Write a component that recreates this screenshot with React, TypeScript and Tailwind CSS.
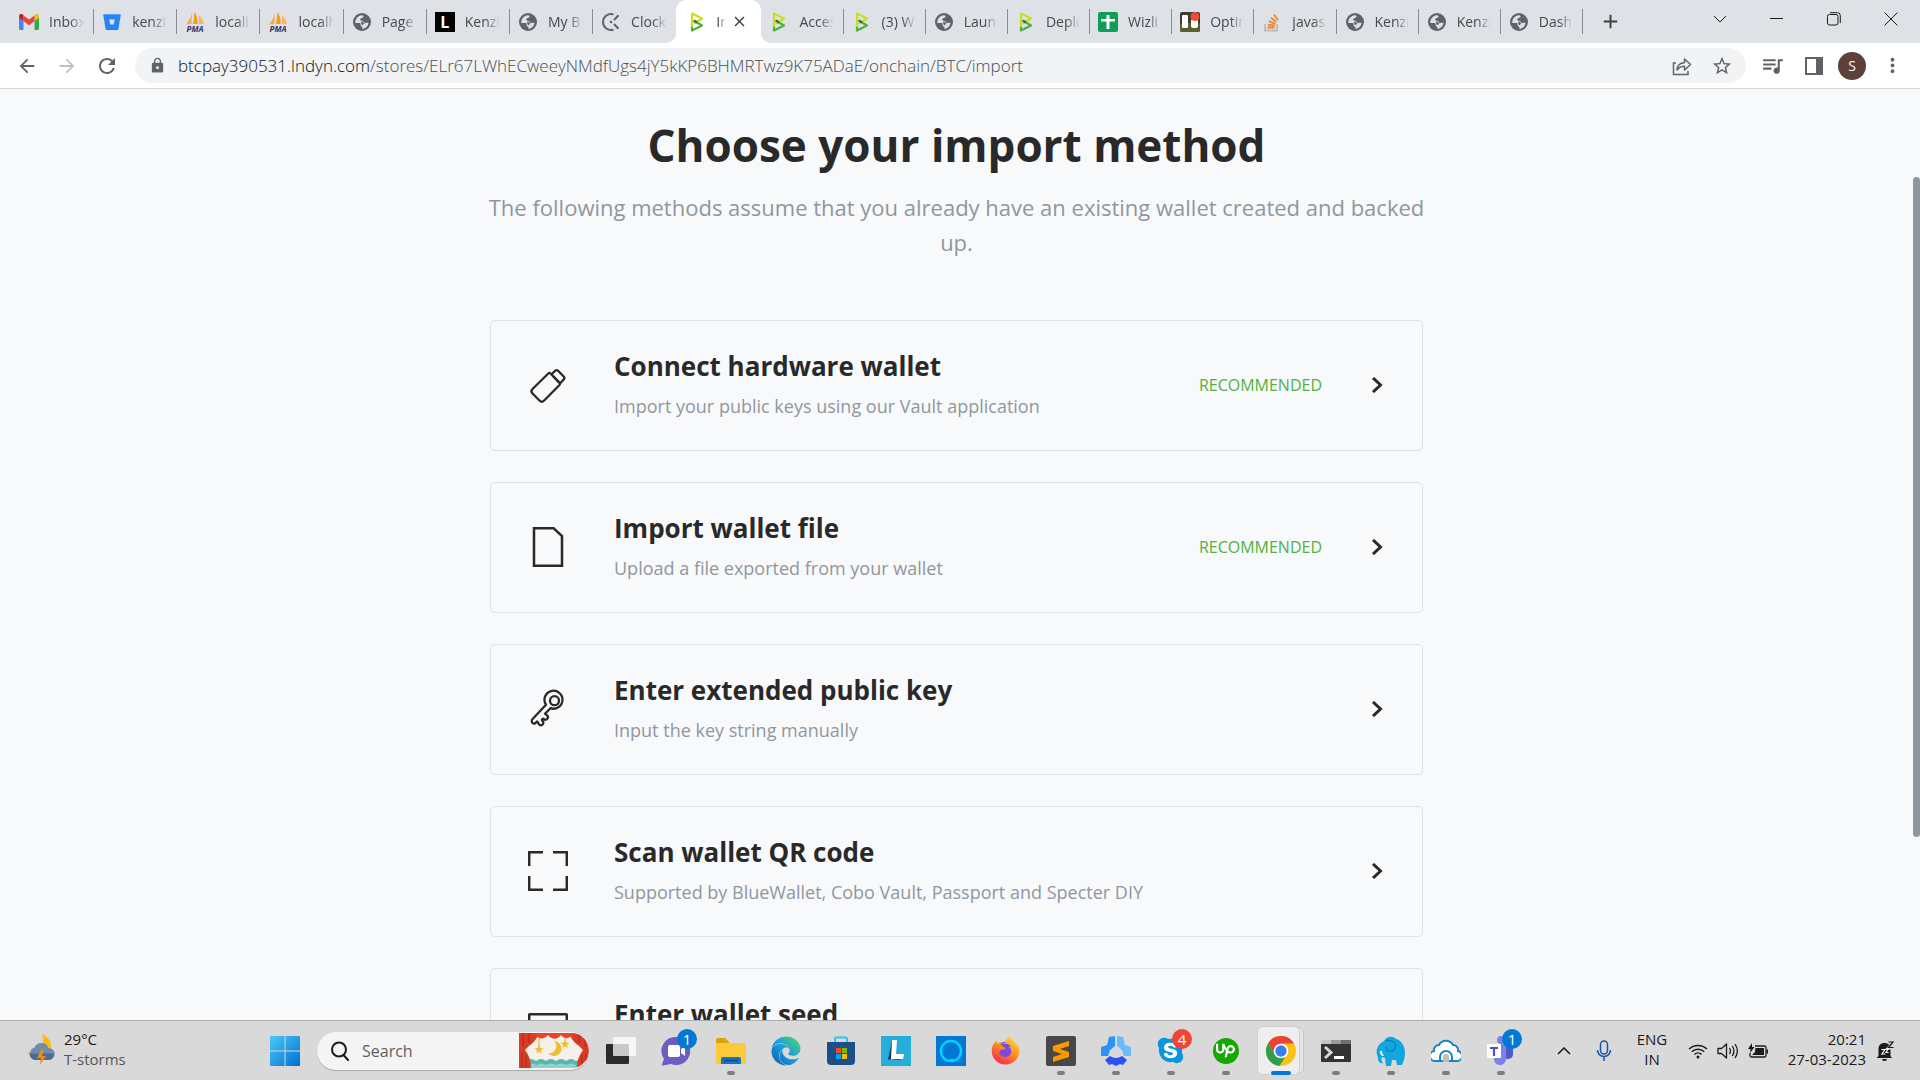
import React from 'react';
import {
  MdArrowBack,
  MdArrowForward,
  MdRefresh,
  MdLock,
  MdStarBorder,
  MdQueueMusic,
  MdMoreVert,
  MdAdd,
  MdClose,
} from 'react-icons/md';
import { FaBitbucket, FaEdge, FaFirefoxBrowser, FaSkype } from 'react-icons/fa';
import { SiUpwork } from 'react-icons/si';

/* ---------- Favicons ---------- */

const GmailIcon = () => (
  <svg viewBox="0 0 20 16" className="w-5 h-4">
    <path d="M0 3v11.5c0 .8.6 1.5 1.4 1.5h3.1V6.5z" fill="#4285f4" />
    <path d="M20 3v11.5c0 .8-.6 1.5-1.4 1.5h-3.1V6.5z" fill="#34a853" />
    <path d="M15.5 2.2v4.9L20 3.6V2.4C20 .3 17.7-.8 16 .5z" fill="#fbbc04" />
    <path d="M4.5 7.1V1.4L10 5.6l5.5-4.2v5.7L10 11.4z" fill="#ea4335" />
    <path d="M0 2.4v1.2l4.5 3.5V1.4L4 .5C2.3-.8 0 .3 0 2.4z" fill="#c5221f" />
  </svg>
);

const PmaIcon = () => (
  <svg viewBox="0 0 20 20" className="w-5 h-5">
    <path d="M7 1 6.5 12 1 12.500C4 9 6 5 7 1z" fill="#f9a94a" />
    <path d="M9 0c3 3 4 8 3.500 12L7.800 12C9 8 9.500 4 9 0z" fill="#f89c0e" />
    <path d="M13.500 3c3 2.500 5 6 5.500 9l-5.500.3c.5-3 .5-6 0-9.300z" fill="#f9b46a" />
    <text x="10" y="19.500" textAnchor="middle" fontSize="8" fontWeight="700" fontStyle="italic" fontFamily="Open Sans, sans-serif" fill="#34336b">PMA</text>
  </svg>
);

const GlobeIcon = () => (
  <svg viewBox="0 0 20 20" className="w-5 h-5">
    <circle cx="10" cy="10" r="9" fill="#5f6368" />
    <path d="M10 3.200c1.500.3 2 1.200 1.200 2.100-.9 1-2.600.7-3 1.900-.3 1 .6 1.400 1.800 1.500 1.800.2 1.500 2 2.900 2.200 1.200.2 2.400-.4 3.600.1-.4 3-3 5.700-6 6l-.2-2.200c-1.500-.4-1.900-1.400-1.700-2.600.1-.9-.5-1.300-1.600-1.300H3.300C3 7 6 3.200 10 3.200z" fill="#dee1e6" />
    <path d="M9.500 9.200c1.600.2 1.600 2 3 2.300l-2.200 1.700c-1-.8-1.500-2-.8-4z" fill="#5f6368" />
  </svg>
);

const LetterIcon = () => (
  <span className="flex w-5 h-5 items-center justify-center bg-black text-white text-base leading-5 font-bold">L</span>
);

const ClockifyIcon = () => (
  <svg viewBox="0 0 20 20" className="w-5 h-5" fill="none" stroke="#5f6368" strokeWidth="2">
    <path d="M12.500 2.400A8 8 0 1 0 12.500 17.600" />
    <path d="m13 8 4.500-4.700M13 12l4.500 4.700" />
    <circle cx="10" cy="10" r="1.300" fill="#5f6368" stroke="none" />
  </svg>
);

const BtcPayIcon = () => (
  <svg viewBox="0 0 14 20" className="w-[14px] h-5" fill="none" strokeWidth="2.200" strokeLinecap="round" strokeLinejoin="round">
    <path d="M4.500 9 12 13.500 2 18.500V14" stroke="#51b13e" />
    <path d="M2 14V1.500L12 6.500 4.500 11" stroke="#cedc21" />
    <path d="M4.500 9 6.500 10.200" stroke="#1e7a44" />
  </svg>
);

const WizlistIcon = () => (
  <svg viewBox="0 0 20 20" className="w-5 h-5">
    <rect width="20" height="20" rx="2" fill="#0f9d58" />
    <path d="M8.500 3h3v4H17v2.500h-5.500V17h-3V9.500H3V7h5.500z" fill="#fff" />
  </svg>
);

const OptimIcon = () => (
  <svg viewBox="0 0 20 20" className="w-5 h-5">
    <rect width="20" height="20" rx="2" fill="#3f3a2c" />
    <rect y="11" width="20" height="9" rx="2" fill="#5c5f31" />
    <rect x="2" y="3" width="6" height="13" rx="1" fill="#fff" />
    <rect x="11" y="7" width="7" height="9" rx="2" fill="#fff" />
    <circle cx="15" cy="4.500" r="4.500" fill="#ee4b35" />
  </svg>
);

const StackIcon = () => (
  <svg viewBox="0 0 20 20" className="w-5 h-5" fill="none" strokeWidth="1.800">
    <path d="M3 12v6.500h12V12" stroke="#bcbbbb" />
    <path d="M5.500 15.500h7M5.800 12.600l6.900 1M6.800 9l6.400 2.900M9 5.600l5.300 4.500M12 2.500l4 5.700" stroke="#f48024" />
  </svg>
);

const BitbucketIcon = () => <FaBitbucket className="text-[#2684ff]" size={18} />;

const tabs = [
  { title: 'Inbox', Icon: GmailIcon },
  { title: 'kenzi', Icon: BitbucketIcon },
  { title: 'localh', Icon: PmaIcon },
  { title: 'localh', Icon: PmaIcon },
  { title: 'Page', Icon: GlobeIcon },
  { title: 'Kenzi', Icon: LetterIcon },
  { title: 'My B', Icon: GlobeIcon },
  { title: 'Clock', Icon: ClockifyIcon },
  { title: 'Im', Icon: BtcPayIcon, active: true },
  { title: 'Acces', Icon: BtcPayIcon },
  { title: '(3) W', Icon: BtcPayIcon },
  { title: 'Laun', Icon: GlobeIcon },
  { title: 'Deplo', Icon: BtcPayIcon },
  { title: 'Wizli', Icon: WizlistIcon },
  { title: 'Optin', Icon: OptimIcon },
  { title: 'javas', Icon: StackIcon },
  { title: 'Kenzi', Icon: GlobeIcon },
  { title: 'Kenzi', Icon: GlobeIcon },
  { title: 'Dash', Icon: GlobeIcon },
];

/* ---------- Browser ---------- */

const TabStrip = () => (
  <div className="flex h-[43px] bg-[#dee1e6] pl-[11px]">
    <div
      className="grid flex-1 max-w-[1572px] grid-cols-[repeat(8,minmax(0,83fr))_minmax(0,85fr)_repeat(10,minmax(0,82fr))]"
      role="tablist"
    >
      {tabs.map(({ title, Icon, active }, i) =>
        active ? (
          <div key={i} className="relative flex items-center rounded-t-[10px] bg-white pl-[14px]">
            <svg viewBox="0 0 10 10" className="absolute bottom-0 -left-[10px] size-[10px] fill-white"><path d="M10 0v10H0A10 10 0 0 0 10 0z" /></svg>
            <svg viewBox="0 0 10 10" className="absolute bottom-0 -right-[10px] size-[10px] fill-white"><path d="M0 0v10h10A10 10 0 0 1 0 0z" /></svg>
            <button role="tab" aria-selected="true" className="flex items-center gap-3 text-sm text-[#45494d]">
              <Icon />
              <span className="w-[10px] overflow-hidden whitespace-nowrap [mask-image:linear-gradient(to_right,black_30%,transparent)]">{title}</span>
            </button>
            <button aria-label="Close tab" className="ml-[5px] text-[#3c4043]"><MdClose size={17} /></button>
          </div>
        ) : (
          <button
            key={i}
            role="tab"
            aria-selected="false"
            className={`my-[9px] flex items-center gap-[10px] pl-2 pr-[9px] text-sm text-[#45494d] ${i === 7 ? '' : 'border-r border-[#8b8f94]'}`}
          >
            <span className="flex w-5 shrink-0 justify-center"><Icon /></span>
            <span className="flex-1 overflow-hidden whitespace-nowrap text-left [mask-image:linear-gradient(to_right,black_60%,transparent)]">{title}</span>
          </button>
        )
      )}
    </div>
    <button aria-label="New tab" className="ml-4 text-[#3c4043]"><MdAdd size={23} /></button>
    <div className="ml-auto flex h-[37px] pr-px text-[#1b1b1b]">
      <button aria-label="Search tabs" className="flex w-[57px] items-center justify-center">
        <svg viewBox="0 0 14 8" className="w-[14px]" fill="none" stroke="currentColor"><path d="m1 1 6 6 6-6" /></svg>
      </button>
      <button aria-label="Minimize" className="flex w-[57px] items-center justify-center"><span className="h-px w-[13px] bg-current" /></button>
      <button aria-label="Restore" className="flex w-[57px] items-center justify-center">
        <svg viewBox="0 0 14 14" className="w-[14px]" fill="none" stroke="currentColor"><rect x=".5" y="2.500" width="10.500" height="10.500" rx="2" /><path d="M3 .7h7.500A2.800 2.800 0 0 1 13.300 3.500V11" /></svg>
      </button>
      <button aria-label="Close" className="flex w-[57px] items-center justify-center">
        <svg viewBox="0 0 14 14" className="w-[14px]" stroke="currentColor"><path d="m.5.5 13 13M13.500.5l-13 13" /></svg>
      </button>
    </div>
  </div>
);

const Toolbar = () => (
  <div className="flex h-[46px] items-center border-b border-[#d5d7da] bg-white pl-[7px] pr-[10px] text-[#5f6368]">
    <button aria-label="Back" className="flex w-10 justify-center"><MdArrowBack size={22} /></button>
    <button aria-label="Forward" className="flex w-10 justify-center text-[#bdc1c6]"><MdArrowForward size={22} /></button>
    <button aria-label="Reload" className="flex w-10 justify-center"><MdRefresh size={24} /></button>
    <div className="ml-2 flex h-[35px] flex-1 items-center rounded-full bg-[#f1f3f4] pl-[14px] pr-1">
      <MdLock size={17} />
      <a href="#" className="ml-3 flex-1 text-[17px] leading-6 font-light text-[#4a4e52]">
        <span className="text-[#111214]">btcpay390531.lndyn.com</span>/stores/ELr67LWhECweeyNMdfUgs4jY5kKP6BHMRTwz9K75ADaE/onchain/BTC/import
      </a>
      <button aria-label="Share" className="flex w-10 justify-center">
        <svg viewBox="0 0 20 20" className="size-5" fill="none" stroke="currentColor" strokeWidth="1.500">
          <path d="M4 7H1.500v11.500H16V15" />
          <path d="M5 14c.3-4.500 3-7 7.500-7.200V3l6 5.500-6 5.500v-3.700C9.500 10.300 7 11.500 5 14z" strokeLinejoin="round" />
        </svg>
      </button>
      <button aria-label="Bookmark" className="flex w-10 justify-center"><MdStarBorder size={22} /></button>
    </div>
    <button aria-label="Media" className="flex w-[52px] justify-center"><MdQueueMusic size={25} /></button>
    <button aria-label="Side panel" className="flex w-8 justify-center">
      <svg viewBox="0 0 18 18" className="size-[18px]"><rect x="1" y="1" width="16" height="16" fill="none" stroke="currentColor" strokeWidth="2" /><path d="M11 1h6v16h-6z" fill="currentColor" /></svg>
    </button>
    <button aria-label="Profile" className="mx-2 size-7 rounded-full bg-[#5d4037] text-sm text-white">S</button>
    <button aria-label="Menu" className="flex w-9 justify-center"><MdMoreVert size={23} /></button>
  </div>
);

/* ---------- Import methods ---------- */

const UsbIcon = () => (
  <svg viewBox="0 0 40 40" className="size-10" fill="none" stroke="currentColor" strokeWidth="2.300" strokeLinejoin="round">
    <path d="M20.500 8.300 4.500 24a3 3 0 0 0-.2 4.200l7.400 7.500a3 3 0 0 0 4.200 0L31.500 20a1.500 1.500 0 0 0 0-2L22.300 8.300a1.300 1.300 0 0 0-1.800 0z" />
    <path d="m23.500 9.500 3.600-3.700a2.200 2.200 0 0 1 3 0l5.600 5.700a2.200 2.200 0 0 1 0 3l-4 4.200M25 11l6 6" />
  </svg>
);

const FileIcon = () => (
  <svg viewBox="0 0 40 40" className="size-10" fill="none" stroke="currentColor" strokeWidth="2.500">
    <path d="M6 1.200h19.500L34 9V38.800H6z" />
  </svg>
);

const KeyIcon = () => (
  <svg viewBox="0 0 40 40" className="size-10" fill="none" stroke="currentColor" strokeWidth="2.300" strokeLinejoin="round">
    <path d="M18 15.700 4.600 30a2.800 2.800 0 0 0 .2 4.200c1 .9 2.200.6 3.400-.9l1-.9 1.700 2.800c1 1.500 3 1.500 4-.1.9-1.400.4-2.500-.6-3.400-1-1 .6-2.600 1.700-1.700l1.200.9c1.800 0 3.300-2 2.600-3.700L17 24.700l5.500-5.500a9 9 0 1 0-4.500-3.500z" />
    <circle cx="26.500" cy="11.700" r="4.500" />
  </svg>
);

const ScanIcon = () => (
  <svg viewBox="0 0 40 40" className="size-10" fill="none" stroke="currentColor" strokeWidth="2.500">
    <path d="M1.200 15V1.200H15M25 1.200h13.800V15M38.800 25v13.800H25M15 38.800H1.200V25" />
  </svg>
);

const SeedIcon = () => (
  <svg viewBox="0 0 40 40" className="size-10" fill="none" stroke="currentColor" strokeWidth="2.500">
    <rect x="1.200" y="1.200" width="37.600" height="37.600" rx="1" />
    <path d="M8 13h24M8 20h24M8 27h14" />
  </svg>
);

const methods = [
  { title: 'Connect hardware wallet', text: 'Import your public keys using our Vault application', Icon: UsbIcon, recommended: true },
  { title: 'Import wallet file', text: 'Upload a file exported from your wallet', Icon: FileIcon, recommended: true },
  { title: 'Enter extended public key', text: 'Input the key string manually', Icon: KeyIcon },
  { title: 'Scan wallet QR code', text: 'Supported by BlueWallet, Cobo Vault, Passport and Specter DIY', Icon: ScanIcon },
  { title: 'Enter wallet seed', text: '', Icon: SeedIcon },
];

const ImportPage = () => (
  <main className="flex min-h-0 flex-1 overflow-hidden bg-[#f8f9fb] text-[#292929]">
    <div className="flex-1">
      <div className="mx-auto max-w-[933px] pt-[26px]">
        <h1 className="text-center text-[44px] leading-[60px] font-bold">Choose your import method</h1>
        <p className="-mx-3 mt-[15px] text-center text-[22px] leading-[35px] text-[#8f979e]">
          The following methods assume that you already have an existing wallet created and backed up.
        </p>
        <div className="mt-[60px] flex flex-col gap-[31px]">
          {methods.map(({ title, text, Icon, recommended }) => (
            <a key={title} href="#" className="flex h-[131px] items-center rounded-[5px] border border-[#dfe1e6] pb-px pl-[37px] pr-[39px]">
              <Icon />
              <div className="ml-[46px] flex-1">
                <h2 className="text-[26px] leading-8 font-bold">{title}</h2>
                <p className="mt-[10px] h-7 text-lg leading-7 text-[#8f979e]">{text}</p>
              </div>
              {recommended && <span className="mr-[49px] text-base text-[#51b13e]">RECOMMENDED</span>}
              <svg viewBox="0 0 12 16" className="w-3" fill="none" stroke="currentColor" strokeWidth="3"><path d="m2 1 7.500 7L2 15" /></svg>
            </a>
          ))}
        </div>
      </div>
    </div>
    {/* Scrollbar */}
    <div className="w-[7px] pt-[88px]">
      <div className="h-[660px] rounded-full bg-[#8f979e]" />
    </div>
  </main>
);

/* ---------- Taskbar ---------- */

const Weather = () => (
  <svg viewBox="0 0 30 32" className="w-[30px]">
    <path d="M16 1c8 3 12 12 7 20-5 6-16 7-22-2 10 2 19-6 15-18z" fill="#fdbb12" />
    <path d="M9 27a6.500 6.500 0 0 1-.5-12.500 7.500 7.500 0 0 1 14 .5A6 6 0 0 1 23 27z" fill="#6d8cb0" />
    <path d="M9 27a6.500 6.500 0 0 1-5.500-6.500h24A5.500 5.500 0 0 1 23 27z" fill="#4a6b94" />
    <path d="m15 17-4 8h4l-1 7 6-9h-4l2-6z" fill="#f7860f" />
  </svg>
);

const Curtain = () => (
  <svg viewBox="0 0 70 35" className="h-[35px] w-[70px] rounded-r-full">
    <rect width="70" height="35" fill="#f6f0ea" />
    <path d="M8 28q4-4 9 0 5-4 10 0 5-4 10 0 5-4 10 0 5-4 10 0 4-3 6 0v7H8z" fill="#5cb5b0" />
    <path d="M8 32q5-3 9 0 5-3 10 0 5-3 10 0 5-3 10 0 5-3 10 0v3H8z" fill="#8ad4cb" />
    <path d="M0 0h19c0 8-9 12-13 17 4 5 6 11 6 18H0zM70 0H51c0 8 9 12 13 17-4 5-6 11-6 18h12z" fill="#d93c26" />
    <path d="M15 0c4 7 10 7 14 2 4 5 9 5 13 0 4 5 9 4 13-2z" fill="#e8442c" />
    <path d="M4 0v14M10 0v10M66 0v14M60 0v10M3 20v15M7 22v13M67 20v15M63 22v13" stroke="#a82818" strokeWidth="1" />
    <path d="M35 8a7.500 7.500 0 1 1-6 12 7 7 0 0 0 6-12z" fill="#f0bd2d" />
    <path d="M20 4v9M46 4v4" stroke="#d9a11f" strokeWidth=".8" />
    <path d="m20 12 1.300 3 3.200.2-2.500 2 .8 3.200-2.800-1.700-2.800 1.700.8-3.200-2.500-2 3.200-.2zM46 6.500l1.300 3 3.200.2-2.500 2 .8 3.200-2.800-1.700-2.800 1.700.8-3.200-2.500-2 3.200-.2z" fill="#f0bd2d" />
  </svg>
);

const apps = [
  {
    name: 'Task view',
    icon: (
      <svg viewBox="0 0 30 30" className="size-[30px]">
        <rect x="0" y="8" width="23" height="20" rx="1" fill="#2b2b2b" />
        <rect x="7" y="1" width="23" height="19" rx="1" fill="#fff" fillOpacity=".75" />
      </svg>
    ),
  },
  {
    name: 'Chat',
    badge: '1',
    icon: (
      <svg viewBox="0 0 30 30" className="size-[30px]">
        <path d="M15 1a14 14 0 1 1-5 27l-8 1.500c-1 0-1.500-.5-1-1.500l2-5A14 14 0 0 1 15 1z" fill="#6a5fc0" />
        <rect x="7" y="9" width="12" height="12" rx="2" fill="#fff" />
        <path d="m20 13 4-3v10l-4-3z" fill="#fff" />
      </svg>
    ),
  },
  {
    name: 'File Explorer',
    open: true,
    icon: (
      <svg viewBox="0 0 30 30" className="size-[30px]">
        <path d="M0 4a2 2 0 0 1 2-2h7l4 4v5H0z" fill="#e0a106" />
        <path d="M0 7h28a2 2 0 0 1 2 2v19H2a2 2 0 0 1-2-2z" fill="#fccb3c" />
        <path d="M5 28v-5a2 2 0 0 1 2-2h16a2 2 0 0 1 2 2v5z" fill="#1474c4" />
        <path d="M8 24.500h14" stroke="#0b4d8a" strokeWidth="1.500" />
      </svg>
    ),
  },
  {
    name: 'Edge',
    icon: (
      <>
        <svg className="absolute size-0"><defs><linearGradient id="edge" x1="0" y1="1" x2="1" y2="0"><stop offset="0" stopColor="#0c59a4" /><stop offset=".5" stopColor="#1b9de2" /><stop offset="1" stopColor="#58dc5c" /></linearGradient></defs></svg>
        <FaEdge size={30} fill="url(#edge)" />
      </>
    ),
  },
  {
    name: 'Microsoft Store',
    icon: (
      <svg viewBox="0 0 30 30" className="size-[30px]">
        <path d="M9 7V3a1.500 1.500 0 0 1 1.500-1.500h9A1.500 1.500 0 0 1 21 3v4" fill="none" stroke="#2cc3f5" strokeWidth="2" />
        <path d="M1 6h28v19a4 4 0 0 1-4 4H5a4 4 0 0 1-4-4z" fill="#1c4f86" />
        <path d="M10 12h5v5h-5z" fill="#f25022" /><path d="M16 12h5v5h-5z" fill="#7fba00" />
        <path d="M10 18h5v5h-5z" fill="#00a4ef" /><path d="M16 18h5v5h-5z" fill="#ffb900" />
      </svg>
    ),
  },
  {
    name: 'L app',
    icon: (
      <svg viewBox="0 0 30 30" className="size-[30px]">
        <rect width="30" height="30" fill="#27add9" />
        <path d="M11 4 7 24l3-1 11 1-10-3z" fill="#12355e" />
        <path d="M11 4h5l-1 14h8l-1 5H10z" fill="#fff" />
      </svg>
    ),
  },
  {
    name: 'Alexa',
    icon: (
      <svg viewBox="0 0 30 30" className="size-[30px]">
        <rect width="30" height="30" fill="#0078d4" />
        <path d="M13.500 25a10 10 0 1 1 3 0v-1c-1 0-2 0-3 1z" fill="none" stroke="#05d2fb" strokeWidth="2.500" />
      </svg>
    ),
  },
  {
    name: 'Firefox',
    icon: (
      <>
        <svg className="absolute size-0"><defs><linearGradient id="fox" x1=".8" y1="0" x2=".2" y2="1"><stop offset="0" stopColor="#ffe040" /><stop offset=".5" stopColor="#ff8a1e" /><stop offset="1" stopColor="#f6205a" /></linearGradient></defs></svg>
        <span className="flex items-center justify-center rounded-full bg-[radial-gradient(circle,#7a4be0_40%,transparent_45%)]"><FaFirefoxBrowser size={29} fill="url(#fox)" /></span>
      </>
    ),
  },
  {
    name: 'Sublime Text',
    open: true,
    icon: (
      <svg viewBox="0 0 30 30" className="size-[30px]">
        <rect width="30" height="30" rx="2" fill="#474747" />
        <path d="m7 10 16-5v5l-9 3 9 3v5L7 26v-5l9-3-9-3z" fill="#ff9800" />
      </svg>
    ),
  },
  {
    name: 'Hubstaff',
    open: true,
    icon: (
      <svg viewBox="0 0 30 30" className="size-[30px]">
        <path d="m8 1 6-1v10l-5 4-2 6H0v-9l6-2z" fill="#2a93fb" />
        <path d="m22 1-6-1v10l5 4 2 6h7v-9l-6-2z" fill="#69bbfd" />
        <path d="m4 24 5-4q6 4 12 0l5 4-4 5-3-1-4 2-4-2-3 1z" fill="#2b50f6" />
      </svg>
    ),
  },
  {
    name: 'Skype',
    badge: '4',
    open: true,
    icon: <span className="flex rounded-full bg-[radial-gradient(circle,white_55%,transparent_58%)]"><FaSkype size={29} className="text-[#0a96dc]" /></span>,
  },
  { name: 'Upwork', open: true, icon: <span className="flex size-[26px] items-center justify-center rounded-full bg-[#14a800] text-white"><SiUpwork size={19} /></span> },
  {
    name: 'Chrome',
    open: true,
    active: true,
    icon: (
      <svg viewBox="0 0 30 30" className="size-[30px]">
        <circle cx="15" cy="15" r="15" fill="#fbc116" />
        <path d="M2 7.500A15 15 0 0 1 28 7.500H15L9 18.500z" fill="#ea4335" />
        <path d="M2 7.500 8.900 18.500 15 22.500l-1.500 7.500A15 15 0 0 1 2 7.500z" fill="#2f9e4f" />
        <path d="m20.500 19-7 11-.5-8z" fill="#2f9e4f" />
        <circle cx="15" cy="15" r="7.300" fill="#fff" />
        <circle cx="15" cy="15" r="5.700" fill="#3b7ded" />
      </svg>
    ),
  },
  {
    name: 'Terminal',
    open: true,
    icon: (
      <svg viewBox="0 0 30 30" className="size-[30px]">
        <rect y="4" width="30" height="22" rx="1" fill="#333" />
        <path d="M0 4h10v4H0z" fill="#c5c5c5" /><path d="M10 4h10v4H10z" fill="#9a9a9a" /><path d="M20 4h10v4H20z" fill="#6e6e6e" />
        <path d="m4 11 6 5.500L4 22" fill="none" stroke="#d8d8d8" strokeWidth="3" />
        <path d="M13 21.500h10" stroke="#fff" strokeWidth="3" />
      </svg>
    ),
  },
  {
    name: 'Elephant',
    open: true,
    icon: (
      <svg viewBox="0 0 30 30" className="size-[30px]">
        <path d="M8 5c2-4 8-6 12-2 5 1 9 7 9 14 0 4-1 8-3 12h-5l-1-5h-4l-1 6h-5l-1-8-3-1c-1 3-.5 5 1.500 6-4 1-6-2-5.500-6-3-5-1-13 6-16z" fill="#10a7df" />
        <path d="M9 5c7-2 12 2 10 7-2 5-9 4-9-1" fill="none" stroke="#0880b4" strokeWidth="1.200" />
        <path d="M4 15c0 3 1 5 4 5-1-1-2-3-2-5z" fill="#fff" />
      </svg>
    ),
  },
  {
    name: 'Cloud',
    open: true,
    icon: (
      <svg viewBox="0 0 30 30" className="size-[30px]">
        <path d="M5 25A5 5 0 0 1 3 15a5 5 0 0 1 5-6 8 8 0 0 1 14 0 5 5 0 0 1 5 6 5 5 0 0 1-2 10z" fill="#fff" stroke="#1c84c6" strokeWidth="2" />
        <path d="M9 25v-4a6 6 0 0 1 12 0v4" fill="none" stroke="#1c84c6" strokeWidth="2" />
        <path d="M12 26v-5a3 3 0 0 1 6 0v5z" fill="#bdbdbd" />
      </svg>
    ),
  },
  {
    name: 'Teams',
    badge: '1',
    open: true,
    icon: (
      <svg viewBox="0 0 30 30" className="size-[30px]">
        <path d="M18 9h9v9a5 5 0 0 1-9 3z" fill="#5059c9" />
        <path d="M8 8h12v14a6 6 0 0 1-12 2z" fill="#7b83eb" />
        <circle cx="15" cy="4" r="4" fill="#7b83eb" />
        <rect x="1" y="8" width="14" height="14" fill="#fff" />
        <path d="M4 12h8M8 12v8" stroke="#4b53bc" strokeWidth="2.200" />
      </svg>
    ),
  },
];

const Taskbar = () => (
  <footer className="flex h-[60px] border-t border-[#adadad] bg-[#d9d9d9] text-[15px] leading-5 text-[#1b1b1b]">
    <button className="flex w-[257px] items-center gap-2 pb-[3px] pl-[26px] text-left">
      <Weather />
      <span>29°C<br /><span className="text-[#555]">T-storms</span></span>
    </button>
    <button aria-label="Start" className="flex w-[55px] items-center justify-center">
      <svg viewBox="0 0 30 30" className="size-[30px]">
        <defs><linearGradient id="win" x1="0" y1="0" x2="1" y2="1"><stop offset="0" stopColor="#4cc8fa" /><stop offset="1" stopColor="#0070d0" /></linearGradient></defs>
        <path d="M1 0h13.500v14.500H0V1a1 1 0 0 1 1-1zM15.500 0H29a1 1 0 0 1 1 1v13.500H15.500zM0 15.500h14.500V30H1a1 1 0 0 1-1-1zM15.500 15.500H30V29a1 1 0 0 1-1 1H15.500z" fill="url(#win)" />
      </svg>
    </button>
    <label className="ml-[5px] mr-1 flex h-[38px] w-[272px] items-center self-center overflow-hidden rounded-full bg-[#f4f4f4] pl-[13px] shadow-[0_1px_1px_#aaa]">
      <svg viewBox="0 0 20 20" className="size-5" fill="none" stroke="currentColor" strokeWidth="2"><circle cx="9" cy="8.500" r="7" /><path d="m13.500 14 4.500 5" strokeLinecap="round" /></svg>
      <input type="search" aria-label="Search" placeholder="Search" className="ml-3 w-0 flex-1 bg-transparent text-base outline-none placeholder:text-[#5f5f5f]" />
      <Curtain />
    </label>
    {apps.map(({ name, icon, badge, open, active }) => (
      <button key={name} aria-label={name} className="relative flex w-[55px] items-center justify-center">
        {active && (
          <>
            <span className="absolute inset-y-[6px] right-1 w-10 rounded-md bg-[#e6e6e6] border border-[#c8c8c8]" />
            <span className="absolute inset-y-[5px] left-1 right-2 rounded-md bg-[#eeeeee] border border-[#cfcfcf]" />
          </>
        )}
        <span className="relative">{icon}</span>
        {badge && (
          <span className={`absolute right-[6px] top-2 flex size-5 items-center justify-center rounded-full text-white ${badge === '4' ? 'bg-[#f04438]' : 'bg-[#0078d4]'}`}>{badge}</span>
        )}
        {open && <span className={`absolute bottom-[5px] rounded-full ${active ? 'h-1 w-5 bg-[#0078d4]' : 'h-1 w-2 bg-[#7d7d7d]'}`} />}
      </button>
    ))}
    <div className="ml-auto flex items-center pr-[25px]">
      <button aria-label="Hidden icons" className="flex w-10 justify-center">
        <svg viewBox="0 0 14 8" className="w-[14px]" fill="none" stroke="currentColor" strokeWidth="1.500"><path d="m1 7 6-6 6 6" /></svg>
      </button>
      <button aria-label="Microphone" className="flex w-10 justify-center text-[#1c56a8]">
        <svg viewBox="0 0 16 22" className="w-4" fill="none" stroke="currentColor" strokeWidth="1.500"><rect x="4.500" y="1" width="7" height="13" rx="3.500" /><path d="M1.500 10a6.500 6.500 0 0 0 13 0M8 16.500V21" /></svg>
      </button>
      <button className="w-14 pb-[3px] text-center">ENG<br />IN</button>
      <button aria-label="Quick settings" className="flex items-center gap-[9px] px-2">
        <svg viewBox="0 0 20 16" className="w-5" fill="none" stroke="currentColor" strokeWidth="1.500"><path d="M1 6a13 13 0 0 1 18 0M3.800 8.800a9 9 0 0 1 12.400 0M6.500 11.500a5 5 0 0 1 7 0" /><circle cx="10" cy="14" r="1.500" fill="currentColor" stroke="none" /></svg>
        <svg viewBox="0 0 22 18" className="w-[22px]" fill="none" stroke="currentColor" strokeWidth="1.300"><path d="M1 6.500h3.500L9.500 2v14l-5-4.500H1z" strokeLinejoin="round" /><path d="M12.500 6q2 3 0 6M15.300 4q3.300 5 0 10M18 2q4.800 7 0 14" /></svg>
        <svg viewBox="0 0 20 16" className="w-5"><path d="M7 3h9.500A1.500 1.500 0 0 1 18 4.500v8a1.500 1.500 0 0 1-1.500 1.500h-13A1.500 1.500 0 0 1 2 12.500V10" fill="none" stroke="currentColor" strokeWidth="1.300" /><path d="M7.500 5H16v7H4l3-3z" fill="currentColor" /><path d="M18.500 6.500H20v4h-1.500z" fill="currentColor" /><path d="M4 0 0 6h2.500L2 10l4.500-6H4z" fill="currentColor" /></svg>
      </button>
      <button className="w-[90px] pb-[3px] text-right">20:21<br />27-03-2023</button>
      <button aria-label="Notifications" className="ml-[10px]">
        <svg viewBox="0 0 19 20" className="w-[19px]"><path d="M2.500 15V8c0-4 2.500-6 6-6s6 2 6 6v7l1.500 2H.5zM6 18h5a2.500 2 0 0 1-5 0z" fill="currentColor" /><path d="M12 1h5.500L12.500 7H18" fill="none" stroke="#d9d9d9" strokeWidth="3" /><path d="M5.500 8.500H9L5.800 13h3.500M9.500 8h2.700l-2.400 3.500h2.700" fill="none" stroke="#fff" strokeWidth="1.100" /><path d="M12.500 1H17l-4.500 5.500h5" fill="none" stroke="currentColor" strokeWidth="1.200" /></svg>
      </button>
    </div>
  </footer>
);

export default function App() {
  return (
    <div className="flex h-screen flex-col overflow-hidden font-['Open_Sans','Noto_Sans',sans-serif]">
      <TabStrip />
      <Toolbar />
      <ImportPage />
      <Taskbar />
    </div>
  );
}
